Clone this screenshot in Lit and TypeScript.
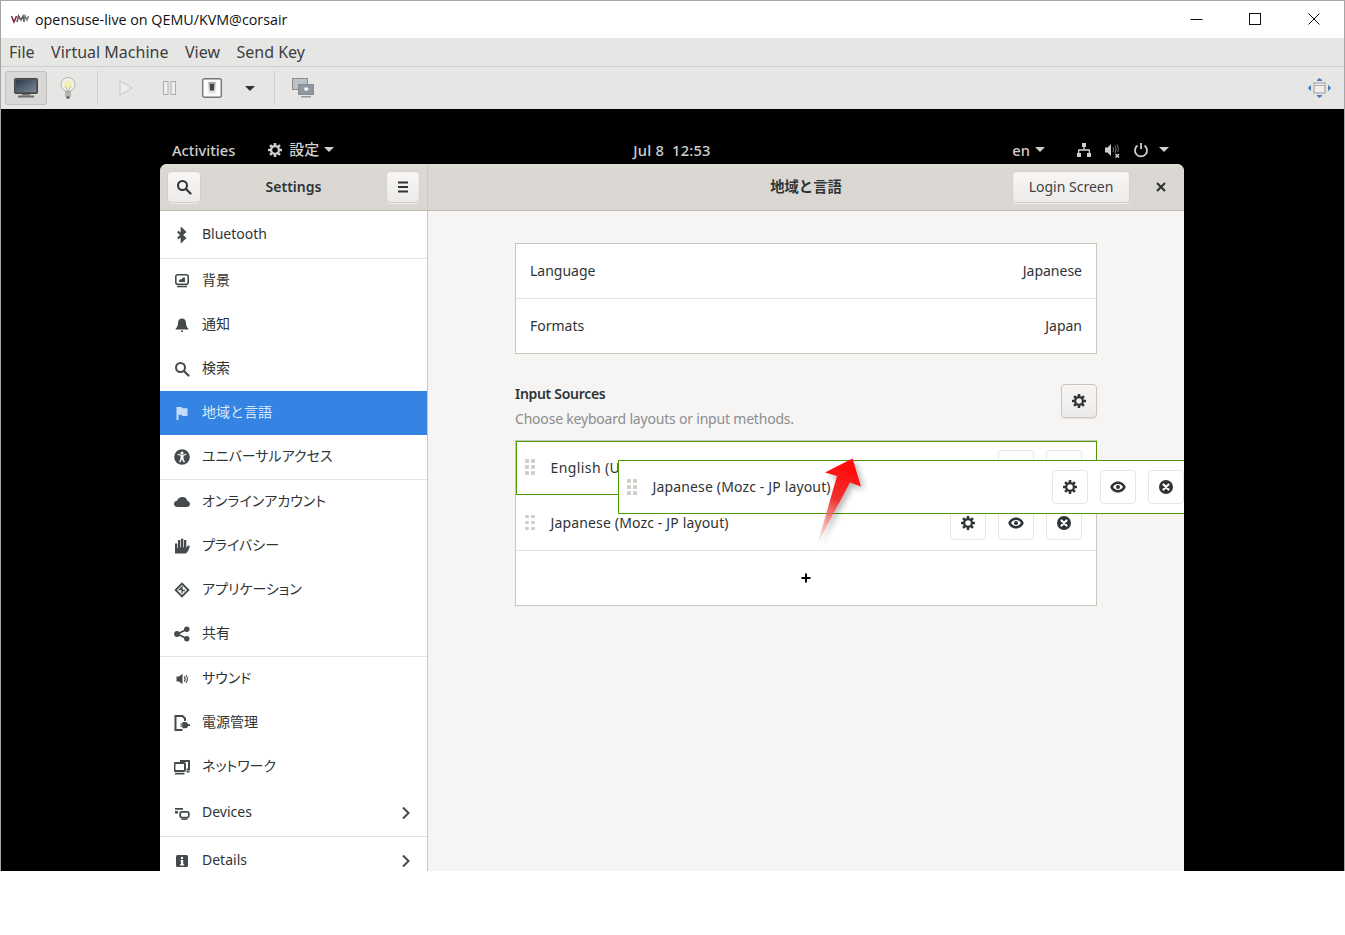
import { LitElement, html, css, svg } from "lit";
import { customElement } from "lit/decorators.js";

const I = (body: unknown, s = 16, vb = "0 0 16 16") =>
  html`<svg width=${s} height=${s} viewBox=${vb} class="ic">${body}</svg>`;

const gearBody = () => svg`<g fill="currentColor">
  ${[0, 45, 90, 135, 180, 225, 270, 315].map(
    (a) => svg`<rect x="6.7" y="1" width="2.6" height="3" rx=".4" transform="rotate(${a} 8 8)"/>`
  )}
  </g><circle cx="8" cy="8" r="3.9" fill="none" stroke="currentColor" stroke-width="2.2"/>`;
const gear = () => I(gearBody());
const eye = () =>
  I(svg`<path fill="currentColor" fill-rule="evenodd" d="M8 2.500C4 2.500 1.300 5 .2 8c1.100 3 3.800 5.500 7.800 5.500s6.700-2.500 7.800-5.500C14.700 5 12 2.500 8 2.500zM8 5.100c2.400 0 4 1.200 4.900 2.900-.9 1.700-2.500 2.900-4.900 2.900S4 9.700 3.100 8C4 6.300 5.600 5.100 8 5.100z"/><circle cx="8" cy="8" r="2" fill="currentColor"/>`);
const xcircle = () =>
  I(svg`<circle cx="8" cy="8" r="7" fill="currentColor"/><path d="M5.500 5.500l5 5m0-5l-5 5" stroke="#fff" stroke-width="2.200" stroke-linecap="round"/>`);
const search = () =>
  I(svg`<circle cx="6.500" cy="6.500" r="4.500" fill="none" stroke="currentColor" stroke-width="2"/><path d="M10 10l4.500 4.500" stroke="currentColor" stroke-width="2.200" stroke-linecap="round"/>`);
const menuIc = () =>
  I(svg`<path d="M3 3.500h10M3 8h10M3 12.500h10" stroke="currentColor" stroke-width="2"/>`);
const plus = () =>
  I(svg`<path d="M8 3.500v9M3.500 8h9" stroke="currentColor" stroke-width="2"/>`);
const chevron = () =>
  I(svg`<path d="M5 2.500L10.500 8 5 13.500" fill="none" stroke="currentColor" stroke-width="2"/>`);

const sideIcons: Record<string, () => unknown> = {
  bt: () => I(svg`<path d="M3.800 4.500l7 6.500-3 3V2l3 3-7 6.500" fill="none" stroke="currentColor" stroke-width="2.300"/>`),
  bg: () => I(svg`<rect x="1.800" y="1.800" width="12.400" height="9.400" rx="2" fill="none" stroke="currentColor" stroke-width="1.600"/><path d="M5 9h6V4.500H9L7.500 6.500 6.500 6 5 7.500z" fill="currentColor"/><path d="M3 13.500h10" stroke="currentColor" stroke-width="1.600"/>`),
  bell: () => I(svg`<path d="M8 1.500c-2.600 0-4 2-4 4.500 0 3-1.200 4.500-2.300 5.500v1h12.600v-1C13.200 10.500 12 9 12 6c0-2.500-1.400-4.500-4-4.500z" fill="currentColor"/><rect x="7" y="13.600" width="2" height="1.400" fill="currentColor"/>`),
  flag: () => I(svg`<path d="M2.500 2h5l1 1.300h5V11H8.500L7.500 9.700H4.500V15h-2z" fill="currentColor"/>`),
  a11y: () => I(svg`<circle cx="8" cy="8" r="7.800" fill="currentColor"/><circle cx="8" cy="3.900" r="1.500" fill="#fff"/><path d="M3.500 5.800l3 1V9.500L5 13.200h1.500L8 10.200l1.500 3H11L9.500 9.500V6.800l3-1-.4-1.100L8 6 3.900 4.700z" fill="#fff"/>`),
  cloud: () => I(svg`<path d="M3.500 13C1.500 13 0 11.800 0 10c0-1.700 1.400-3 3-3.200C3.800 4.600 6 3 8.500 3c2.500 0 4.300 1.500 4.800 3.800 1.600.4 2.700 1.700 2.700 3.200 0 1.800-1.500 3-3.500 3z" fill="currentColor"/>`),
  hand: () => I(svg`<path d="M1 5.500h2.300V10h.7V2h2.300v7.300h.7V.8h2.300v8.500h.7V2h2.300v8l1.300-2.300H16l-1.800 5-2.200 2.800H1z" fill="currentColor"/>`),
  apps: () => I(svg`<path fill="currentColor" fill-rule="evenodd" d="M8 .3L15.700 8 8 15.700.3 8zM8 3L3 8l5 5 5-5z"/><path d="M8 5v2.500H5.500zM8 8.500h3M8 8.500v3" stroke="currentColor" stroke-width="1.300" fill="none"/>`),
  share: () => I(svg`<path d="M12.500 3.500L3.500 8l9 4.500" fill="none" stroke="currentColor" stroke-width="1.700"/><circle cx="12.800" cy="3.200" r="2.700" fill="currentColor"/><circle cx="3" cy="8" r="2.900" fill="currentColor"/><circle cx="12.800" cy="12.800" r="2.700" fill="currentColor"/>`),
  sound: () => I(svg`<path d="M2.500 5.500h2.500L8.500 2.800v10.400L5 10.500H2.500z" fill="currentColor"/><path d="M10.200 5.300c1.100 1.500 1.100 3.900 0 5.400M12 4c1.500 2.200 1.500 5.800 0 8" fill="none" stroke="currentColor" stroke-width="1.100"/>`),
  power: () => I(svg`<path d="M8.500 15H1.500V1h7l2.500 2.500V6" fill="none" stroke="currentColor" stroke-width="2"/><path d="M8.500 7h2.700a3.200 3.200 0 0 1 3 2.300H16v1.600h-1.800a3.200 3.200 0 0 1-3 2.300H8.500v-1.500H6.500v-1.300h2V9.800h-2V8.500h2z" fill="currentColor"/>`),
  net: () => I(svg`<rect x=".5" y="4" width="10.500" height="8" rx="1" fill="none" stroke="currentColor" stroke-width="2"/><path d="M1 13.800h9.500v1.700H1z" fill="currentColor"/><path d="M6 2h9v8.500h-2.500" fill="none" stroke="currentColor" stroke-width="2"/><path d="M12.500 12h3v1.500h-3z" fill="currentColor"/>`),
  dev: () => I(svg`<path d="M1 3h8v1.700H1zM1 6h3v2.500H1z" fill="currentColor"/><rect x="6.200" y="6.800" width="8.600" height="5.800" rx="1.500" fill="none" stroke="currentColor" stroke-width="1.800"/><path d="M7.500 14.200h6" stroke="currentColor" stroke-width="1.400"/>`),
  info: () => I(svg`<rect x="2" y="2" width="12" height="12" rx="1.500" fill="currentColor"/><circle cx="8" cy="5" r="1.200" fill="#fff"/><path d="M6.500 7h2.700v4.300h1v1.200H6v-1.200h1V8.200h-.5z" fill="#fff"/>`),
};

type Row = { icon: string; label: string; tall?: boolean; chev?: boolean; sel?: boolean; sep?: boolean };
const rows: Row[] = [
  { icon: "bt", label: "Bluetooth", tall: true, sep: true },
  { icon: "bg", label: "背景" },
  { icon: "bell", label: "通知" },
  { icon: "search", label: "検索" },
  { icon: "flag", label: "地域と言語", sel: true },
  { icon: "a11y", label: "ユニバーサルアクセス", sep: true },
  { icon: "cloud", label: "オンラインアカウント" },
  { icon: "hand", label: "プライバシー" },
  { icon: "apps", label: "アプリケーション" },
  { icon: "share", label: "共有", sep: true },
  { icon: "sound", label: "サウンド" },
  { icon: "power", label: "電源管理" },
  { icon: "net", label: "ネットワーク" },
  { icon: "dev", label: "Devices", tall: true, chev: true, sep: true },
  { icon: "info", label: "Details", tall: true, chev: true },
];

const handle = () => html`<span class="handle">${[0, 1, 2, 3, 4, 5].map(() => html`<i></i>`)}</span>`;

@customElement("app-root")
export class AppRoot extends LitElement {
  static styles = css`
    :host { display: block; width: 1345px; height: 935px; background: #fff; font-family: "Noto Sans", "Noto Sans CJK JP", sans-serif; overflow: hidden; }
    * { box-sizing: border-box; }
    .ic { display: block; flex: none; }
    .vm { height: 871px; border: 1px solid #a5a5a5; border-bottom: 0; display: flex; flex-direction: column; overflow: hidden; position: relative; }
    .title { height: 37px; background: #fff; display: flex; align-items: center; flex: none; padding: 0 1px 1px 0; }
    .logo { margin-left: 10px; margin-right: 6px; }
    .title span { font-family: "Open Sans", "Noto Sans", sans-serif; font-size: 14.3px; color: #111; flex: 1; }
    .wc { width: 58.5px; height: 35px; display: flex; align-items: center; justify-content: center; color: #111; }
    .menu { height: 29px; flex: none; background: #e6e6e5; border-bottom: 1px solid #cfcfcd; display: flex; align-items: center; padding-left: 8px; gap: 16.5px; font-family: "Noto Sans", sans-serif; font-size: 16px; color: #3b3f40; }
    .tool { height: 42px; flex: none; background: #e6e6e5; display: flex; align-items: center; padding-left: 4px; }
    .cell { height: 34px; display: flex; align-items: center; justify-content: center; }
    .w42 { width: 42px; } .w43 { width: 43px; } .w44 { width: 44px; } .w32 { width: 32px; }
    .caret { margin-left: 1px; }
    .active { background: #d8d8d7; border: 1px solid #c0c0be; border-radius: 3px; }
    .tsep { width: 1px; height: 34px; background: #cfcfcd; margin: 0 6px 0 8px; }
    .grow { flex: 1; }
    .fit { margin-right: 9px; }
    .screen { flex: 1; min-height: 0; background: #000; padding: 28px 160px 0 159px; display: flex; flex-direction: column; }
    .bar { height: 27px; flex: none; display: grid; grid-template-columns: 1fr auto 1fr; align-items: center; color: #cfcfcf; font-size: 14.7px; font-weight: 500; padding: 0 12px 2px; }
    .bar > div { display: flex; align-items: center; }
    .act { margin-right: 32px; }
    .date { letter-spacing: .2px; }
    .lab { margin: 0 0 3px 6px; font-family: "Noto Sans CJK JP", sans-serif; font-size: 15px; }
    .car { width: 0; height: 0; border: 5px solid transparent; border-top: 5px solid #cfcfcf; border-bottom: 0; margin-left: 5px; }
    .br { justify-content: flex-end; padding-right: 3px; }
    .br .nw { margin-left: 31px; }
    .br .sp { margin-left: 12px; }
    .br .pw { margin-left: 13px; }
    .br .c2 { margin-left: 10px; }
    .settings { flex: 1; min-height: 0; position: relative; overflow: hidden; border-radius: 7px 7px 0 0; display: flex; flex-direction: column; background: #f6f5f4; color: #2e3436; }
    .hdr { height: 47px; flex: none; background: linear-gradient(#e1ded9, #dbd8d4 10%, #dad7d3); border-bottom: 1px solid #bfb8b1; display: flex; }
    .hl { width: 268px; flex: none; border-right: 1px solid #cdc8c2; display: flex; align-items: center; justify-content: space-between; padding: 0 7px; font-weight: 600; font-size: 14px; color: #2e3436; }
    .hl span { margin-bottom: 2px; }
    .hr { flex: 1; display: grid; grid-template-columns: 1fr auto 1fr; align-items: center; font-weight: 600; font-size: 14px; }
    .hr .t { grid-column: 2; font-family: "Noto Sans CJK JP", sans-serif; font-size: 14.3px; margin-bottom: 3px; }
    .hr .act2 { grid-column: 3; display: flex; justify-content: flex-end; align-items: center; gap: 25px; padding-right: 17px; }
    .btn { height: 32px; border-radius: 4px; border: 1px solid #d3cfca; background: linear-gradient(#f7f6f5, #edebe9); display: flex; align-items: center; justify-content: center; color: #2e3436; font-size: 14px; font-weight: 400; box-shadow: 0 1px 0 rgba(255,255,255,.5); }
    .sq { width: 34px; }
    .login { width: 118px; color: #3d4345; padding-bottom: 2px; }
    .x { color: #2e3436; width: 12px; }
    .body { flex: 1; min-height: 0; display: flex; }
    .side { width: 268px; flex: none; background: #fff; border-right: 1px solid #c9c5bf; overflow: hidden; }
    .row { height: 44px; display: flex; align-items: center; padding: 0 14px 0; gap: 12px; font-size: 14px; color: #2e3436; }
    .row span { flex: 1; margin-bottom: 2px; }
    .row.a span { margin-bottom: 4px; }
    .row span.kana { font-feature-settings: "palt"; }
    .row .ic { color: #454a4c; }
    .row.tall { height: 47px; }
    .row.sep { border-bottom: 1px solid #e4e3e1; }
    .row.tall.sep { height: 48px; }
    .row.a.sep { height: 45px; }
    .row.sel { background: #3584e4; color: #d8e8fb; }
    .row.sel .ic { color: #c5ddf8; }
    .row .chev { margin-right: -1px; }
    .main { flex: 1; padding: 32px 0 0 87px; }
    .col { width: 582px; }
    .frame { background: #fff; border: 1px solid #c9c5bf; }
    .lrow { height: 54px; display: flex; align-items: center; justify-content: space-between; padding: 0 14px 2px; font-size: 14px; }
    .lrow + .lrow { height: 55px; border-top: 1px solid #e4e3e1; }
    .is { margin-top: 30px; display: flex; justify-content: space-between; align-items: flex-start; height: 44px; margin-bottom: 12px; }
    .ist { font-size: 14px; font-weight: 600; line-height: 20px; letter-spacing: -.3px; }
    .iss { font-size: 14px; color: #8b8e8f; line-height: 20px; margin-top: 5px; letter-spacing: -.2px; }
    .gbtn { width: 36px; height: 34px; border-color: #c9c5bf; box-shadow: 0 1px 1px rgba(0,0,0,.08); }
    .src { height: 55px; display: flex; align-items: center; padding: 0 14px 0 9px; font-size: 14px; background: #fff; }
    .src.green { border: 1px solid #4e9a06; margin: 0 -1px 0 0; padding: 0 14px 2px 8px; height: 54px; }
    .src.green .name { letter-spacing: .4px; }
    .src.two { height: 56px; border-bottom: 1px solid #e4e3e1; }
    .handle { display: grid; grid-template-columns: 3.500px 3.500px; gap: 2.500px; width: 10px; margin-right: 15.5px; flex: none; }
    .handle i { width: 3.500px; height: 3.500px; background: #d0cdc8; border-radius: 1px; }
    .src .name { flex: 1; white-space: nowrap; letter-spacing: .15px; }
    .ob { width: 36px; height: 34px; border: 1px solid #e6e5e3; border-radius: 4px; background: #fff; display: flex; align-items: center; justify-content: center; margin-left: 12px; color: #2e3436; }
    .add { height: 54px; display: flex; align-items: center; justify-content: center; color: #000; }
    .drag { position: absolute; left: 458px; top: 296px; width: 581px; height: 54px; border: 1px solid #4e9a06; background: #fff; }
    .src.dr { padding-left: 8px; height: 52px; }
    .src.dr .name { margin-bottom: 2px; }
    .arrow { position: absolute; left: 805px; top: 450px; pointer-events: none; }
  `;

  render() {
    return html`
      <div class="vm">
        <div class="title">
          <svg class="logo ic" width="18" height="10" viewBox="0 0 18 10" fill="none" stroke-width="1.500">
            <path d="M.5 2l2.500 6L5.500 2" stroke="#7a2434"/><path d="M6 8l1.500-6L10 6l2-4 1 6" stroke="#555"/><path d="M13 8l1-6 2 4 1.500-4" stroke="#777"/>
          </svg>
          <span>opensuse-live on QEMU/KVM@corsair</span>
          <div class="wc">${I(svg`<path d="M.5 6.500h12" stroke="currentColor"/>`, 13, "0 0 13 13")}</div>
          <div class="wc">${I(svg`<rect x=".5" y=".5" width="11" height="11" fill="none" stroke="currentColor"/>`, 12, "0 0 12 12")}</div>
          <div class="wc">${I(svg`<path d="M.5.500l11 11m0-11l-11 11" stroke="currentColor"/>`, 12, "0 0 12 12")}</div>
        </div>
        <div class="menu"><span>File</span><span>Virtual Machine</span><span>View</span><span>Send Key</span></div>
        <div class="tool">
          <div class="cell w42 active">
            <svg class="ic" width="24" height="20" viewBox="0 0 24 20"><defs><linearGradient id="sc" x1="0" y1="0" x2="1" y2="1"><stop offset="0" stop-color="#2c3a4a"/><stop offset="1" stop-color="#7d8896"/></linearGradient></defs><rect x=".5" y=".5" width="23" height="15" rx="1" fill="#555" stroke="#444"/><rect x="2" y="2" width="20" height="12" fill="url(#sc)"/><rect x="8" y="16" width="8" height="1.500" fill="#777"/><rect x="4" y="17.500" width="16" height="2" fill="#6a6a6a"/></svg>
          </div>
          <div class="cell w42">
            <svg class="ic" width="16" height="23" viewBox="0 0 16 23"><circle cx="8" cy="7.500" r="7" fill="#eef0ea" stroke="#b5b5ae"/><circle cx="8" cy="7.500" r="3.500" fill="#f5edaa"/><path d="M5 9l3 5 3-5" fill="none" stroke="#bba"/><rect x="5" y="14.500" width="6" height="5" fill="#8b8b88"/><path d="M5 16h6M5 18h6" stroke="#ddd"/><rect x="6.500" y="19.500" width="3" height="2" fill="#444"/></svg>
          </div>
          <div class="tsep"></div>
          <div class="cell w44"><svg class="ic" width="14" height="16" viewBox="0 0 14 16"><path d="M1 1l12 7-12 7z" fill="#eee" stroke="#c4c4c2"/></svg></div>
          <div class="cell w43"><svg class="ic" width="13" height="14" viewBox="0 0 13 14"><rect x=".5" y=".5" width="4.500" height="13" fill="#efefee" stroke="#aaa"/><rect x="8" y=".5" width="4.500" height="13" fill="#efefee" stroke="#aaa"/></svg></div>
          <div class="cell w42"><svg class="ic" width="20" height="20" viewBox="0 0 20 20"><defs><linearGradient id="sw" x1="0" y1="0" x2="0" y2="1"><stop offset="0" stop-color="#999"/><stop offset="1" stop-color="#eee"/></linearGradient></defs><rect x=".7" y=".7" width="18.600" height="18.600" rx="2" fill="#fbfbfb" stroke="#777" stroke-width="1.400"/><rect x="6.500" y="4" width="7" height="12" fill="url(#sw)"/><rect x="8" y="6" width="4" height="6.500" fill="#444"/></svg></div>
          <div class="cell w32 caret"><svg class="ic" width="10" height="5" viewBox="0 0 10 5"><path d="M0 0h10L5 5z" fill="#2e3436"/></svg></div>
          <div class="tsep"></div>
          <div class="cell w44"><svg class="ic" width="22" height="20" viewBox="0 0 22 20"><rect x=".5" y=".5" width="15" height="11" fill="#bcc2c8" stroke="#8a8a8a"/><rect x="6.500" y="6.500" width="15" height="10" fill="#8f98a2" stroke="#8a8a8a"/><path d="M12.500 9.500h3l1 1.500-1 1.500h-3z" fill="#fff"/><rect x="9" y="18" width="10" height="1.500" fill="#999"/></svg></div>
          <div class="grow"></div>
          <div class="cell w32 fit"><svg class="ic" width="23" height="20" viewBox="0 0 23 20"><path d="M11.500.5l2.500 2h-5zM11.500 19.500l2.500-2h-5zM.5 10L2.500 7.500v5zM22.500 10L20.500 7.500v5z" fill="#4f7cb8" stroke="#4f7cb8"/><rect x="6" y="5" width="11" height="10" fill="#eee" stroke="#999"/><path d="M6.500 7.500h10" stroke="#aaa"/></svg></div>
        </div>
        <div class="screen">
          <div class="bar">
            <div>
              <span class="act">Activities</span>
              ${gear()}
              <span class="lab">設定</span><i class="car"></i>
            </div>
            <div class="date">Jul 8&nbsp;&nbsp;12:53</div>
            <div class="br">
              <span>en</span><i class="car"></i>
              <span class="nw">${I(svg`<path d="M6 1h4v4H6zM1 11h4v4H1zM11 11h4v4h-4zM7.300 5h1.400v2.300H14V11h-1.300V8.700H3.300V11H2V7.300h5.300z" fill="currentColor"/>`)}</span>
              <span class="sp">${I(svg`<path d="M1 5.500h2.500L7 2v12L3.500 10.500H1z" fill="currentColor"/><path d="M9 5c.7 1 .7 3 0 5M11 3.500c1.300 2 1.300 5 0 7.500M13 2.500c1.500 2.500 1.500 6 .8 7.500" fill="none" stroke="#777" stroke-width="1"/><path d="M11.500 12l3.500 3.500m0-3.500l-3.500 3.500" stroke="currentColor" stroke-width="1.500"/>`)}</span>
              <span class="pw">${I(svg`<path d="M8 1v6" stroke="currentColor" stroke-width="1.800"/><path d="M4.500 3.600a6 6 0 1 0 7 0" fill="none" stroke="currentColor" stroke-width="1.800"/>`)}</span>
              <i class="car c2"></i>
            </div>
          </div>
          <div class="settings">
            <div class="hdr">
              <div class="hl"><div class="btn sq">${search()}</div><span>Settings</span><div class="btn sq">${menuIc()}</div></div>
              <div class="hr"><span class="t">地域と言語</span><div class="act2"><div class="btn login">Login Screen</div><span class="x">${I(svg`<path d="M2 2l8 8m0-8l-8 8" stroke="currentColor" stroke-width="2.200"/>`, 12, "0 0 12 12")}</span></div></div>
            </div>
            <div class="body">
              <div class="side">
                ${rows.map(
                  (r) => html`<div class="row ${r.tall ? "tall" : "a"} ${r.sep ? "sep" : ""} ${r.sel ? "sel" : ""}">
                    ${r.icon === "search" ? search() : sideIcons[r.icon]()}
                    <span class=${/[\u30A0-\u30FF]/.test(r.label) ? "kana" : ""}>${r.label}</span>
                    ${r.chev ? html`<div class="chev">${chevron()}</div>` : ""}
                  </div>`
                )}
              </div>
              <div class="main">
                <div class="col">
                  <div class="frame">
                    <div class="lrow"><span>Language</span><span>Japanese</span></div>
                    <div class="lrow"><span>Formats</span><span>Japan</span></div>
                  </div>
                  <div class="is">
                    <div><div class="ist">Input Sources</div><div class="iss">Choose keyboard layouts or input methods.</div></div>
                    <div class="btn gbtn">${gear()}</div>
                  </div>
                  <div class="frame">
                    <div class="src green">${handle()}<span class="name">English (US)</span><div class="ob">${eye()}</div><div class="ob">${xcircle()}</div></div>
                    <div class="src two">${handle()}<span class="name">Japanese (Mozc - JP layout)</span><div class="ob">${gear()}</div><div class="ob">${eye()}</div><div class="ob">${xcircle()}</div></div>
                    <div class="add">${plus()}</div>
                  </div>
                </div>
              </div>
            </div>
            <div class="drag"><div class="src dr">${handle()}<span class="name">Japanese (Mozc - JP layout)</span><div class="ob">${gear()}</div><div class="ob">${eye()}</div><div class="ob">${xcircle()}</div></div></div>
          </div>
        </div>
        <svg class="arrow" width="70" height="100" viewBox="805 450 70 100">
          <defs>
            <linearGradient id="ag" gradientUnits="userSpaceOnUse" x1="818" y1="541" x2="846" y2="470"><stop offset="0" stop-color="#f4c8c8" stop-opacity=".5"/><stop offset=".6" stop-color="#f03030"/><stop offset="1" stop-color="#ff0f0f"/></linearGradient>
            <filter id="as" x="-30%" y="-20%" width="170%" height="150%"><feDropShadow dx="3" dy="3" stdDeviation="3" flood-color="#000" flood-opacity=".3"/></filter>
          </defs>
          <polygon points="851.500,457.500 860,485.500 849,481.500 817,541.500 836,475 824,471.500" fill="url(#ag)" filter="url(#as)"/>
        </svg>
      </div>
    `;
  }
}
